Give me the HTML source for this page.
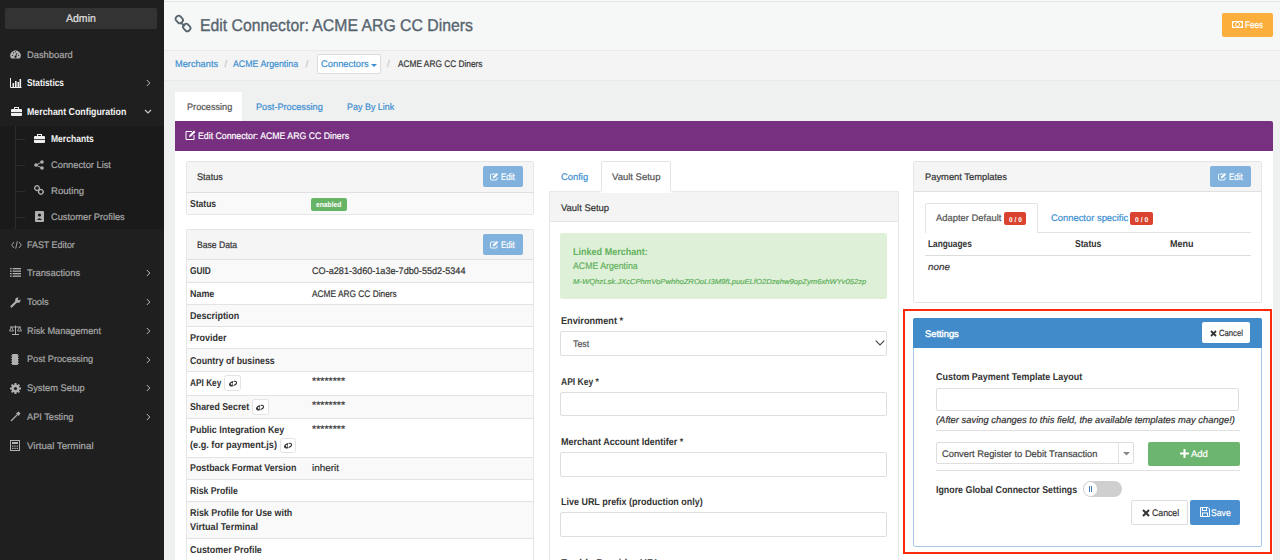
<!DOCTYPE html>
<html><head><meta charset="utf-8"><style>
html,body{margin:0;padding:0;width:1280px;height:560px;overflow:hidden;background:#eff0f0;font-family:'Liberation Sans', sans-serif;}
.t{position:absolute;white-space:nowrap;line-height:1;text-rendering:geometricPrecision;}
.t[style*="font-weight:400"]{-webkit-text-stroke:0.2px currentColor}
svg{position:absolute;overflow:visible}
</style></head><body>
<div style="position:absolute;left:0.00px;top:0.00px;width:163.50px;height:560.00px;background:#1f1f1f"></div>
<div style="position:absolute;left:0.00px;top:126.00px;width:163.50px;height:103.00px;background:#1a1a1a"></div>
<div style="position:absolute;left:5.20px;top:7.50px;width:151.40px;height:21.60px;background:#333;border-radius:2px"></div>
<div class="t" style="left:65.70px;top:14px;font-size:11px;color:#e0e0e0;font-weight:400;transform:scaleX(0.9562);transform-origin:0 0;">Admin</div>
<div class="t" style="left:26.80px;top:51px;font-size:9.5px;color:#a8a8a8;font-weight:400;transform:scaleX(0.9829);transform-origin:0 0;">Dashboard</div>
<div class="t" style="left:27.00px;top:79px;font-size:10px;color:#f2f2f2;font-weight:600;transform:scaleX(0.8307);transform-origin:0 0;">Statistics</div>
<div class="t" style="left:26.80px;top:108px;font-size:10px;color:#f2f2f2;font-weight:600;transform:scaleX(0.8805);transform-origin:0 0;">Merchant Configuration</div>
<div class="t" style="left:50.90px;top:135px;font-size:10px;color:#f2f2f2;font-weight:700;transform:scaleX(0.8543);transform-origin:0 0;">Merchants</div>
<div class="t" style="left:50.90px;top:161px;font-size:9.5px;color:#a8a8a8;font-weight:400;transform:scaleX(0.9787);transform-origin:0 0;">Connector List</div>
<div class="t" style="left:50.90px;top:187px;font-size:9.5px;color:#a8a8a8;font-weight:400;transform:scaleX(1.0104);transform-origin:0 0;">Routing</div>
<div class="t" style="left:50.90px;top:213px;font-size:9.5px;color:#a8a8a8;font-weight:400;transform:scaleX(0.9770);transform-origin:0 0;">Customer Profiles</div>
<div class="t" style="left:27.00px;top:241px;font-size:9.5px;color:#a8a8a8;font-weight:400;transform:scaleX(0.9364);transform-origin:0 0;">FAST Editor</div>
<div class="t" style="left:27.00px;top:269px;font-size:9.5px;color:#a8a8a8;font-weight:400;transform:scaleX(0.9838);transform-origin:0 0;">Transactions</div>
<div class="t" style="left:27.00px;top:298px;font-size:9.5px;color:#a8a8a8;font-weight:400;transform:scaleX(0.9809);transform-origin:0 0;">Tools</div>
<div class="t" style="left:26.70px;top:327px;font-size:9.5px;color:#a8a8a8;font-weight:400;transform:scaleX(0.9659);transform-origin:0 0;">Risk Management</div>
<div class="t" style="left:26.70px;top:355px;font-size:9.5px;color:#a8a8a8;font-weight:400;transform:scaleX(0.9626);transform-origin:0 0;">Post Processing</div>
<div class="t" style="left:26.70px;top:384px;font-size:9.5px;color:#a8a8a8;font-weight:400;transform:scaleX(0.9770);transform-origin:0 0;">System Setup</div>
<div class="t" style="left:26.70px;top:413px;font-size:9.5px;color:#a8a8a8;font-weight:400;transform:scaleX(0.9693);transform-origin:0 0;">API Testing</div>
<div class="t" style="left:26.70px;top:442px;font-size:9.5px;color:#a8a8a8;font-weight:400;transform:scaleX(1.0217);transform-origin:0 0;">Virtual Terminal</div>
<div style="position:absolute;left:15.00px;top:126.00px;width:1.00px;height:103.00px;background:#2c2c2c"></div>
<div style="position:absolute;left:15.00px;top:139.00px;width:10.00px;height:1.00px;background:#2c2c2c"></div>
<div style="position:absolute;left:15.00px;top:165.00px;width:10.00px;height:1.00px;background:#2c2c2c"></div>
<div style="position:absolute;left:15.00px;top:191.00px;width:10.00px;height:1.00px;background:#2c2c2c"></div>
<div style="position:absolute;left:15.00px;top:217.00px;width:10.00px;height:1.00px;background:#2c2c2c"></div>
<svg style="left:145.5px;top:78.8px" width="5" height="8"><path d="M0.8 1 L3.8 4 L0.8 7" fill="none" stroke="#bbb" stroke-width="1"/></svg>
<svg style="left:145.5px;top:268.8px" width="5" height="8"><path d="M0.8 1 L3.8 4 L0.8 7" fill="none" stroke="#bbb" stroke-width="1"/></svg>
<svg style="left:145.5px;top:297.5px" width="5" height="8"><path d="M0.8 1 L3.8 4 L0.8 7" fill="none" stroke="#bbb" stroke-width="1"/></svg>
<svg style="left:145.5px;top:326.5px" width="5" height="8"><path d="M0.8 1 L3.8 4 L0.8 7" fill="none" stroke="#bbb" stroke-width="1"/></svg>
<svg style="left:145.5px;top:355.5px" width="5" height="8"><path d="M0.8 1 L3.8 4 L0.8 7" fill="none" stroke="#bbb" stroke-width="1"/></svg>
<svg style="left:145.5px;top:383.8px" width="5" height="8"><path d="M0.8 1 L3.8 4 L0.8 7" fill="none" stroke="#bbb" stroke-width="1"/></svg>
<svg style="left:145.5px;top:412.8px" width="5" height="8"><path d="M0.8 1 L3.8 4 L0.8 7" fill="none" stroke="#bbb" stroke-width="1"/></svg>
<svg style="left:143.5px;top:109px" width="8" height="5"><path d="M1 1 L4 4 L7 1" fill="none" stroke="#ccc" stroke-width="1.1"/></svg>
<svg style="left:10px;top:50px" width="11" height="9"><path d="M1.2 8.5 A5.2 5.2 0 1 1 9.8 8.5 Z" fill="#b0b0b0"/><circle cx="5.5" cy="6.8" r="1.1" fill="#1f1f1f"/><path d="M5.5 6.8 L7 3" stroke="#1f1f1f" stroke-width="0.9"/><circle cx="2.5" cy="5.5" r="0.6" fill="#1f1f1f"/><circle cx="3.6" cy="2.8" r="0.6" fill="#1f1f1f"/><circle cx="8.5" cy="5.5" r="0.6" fill="#1f1f1f"/><circle cx="5.5" cy="1.8" r="0.6" fill="#1f1f1f"/></svg>
<svg style="left:10px;top:78px" width="12" height="10"><path d="M0.5 0 V9.5 H11.5" fill="none" stroke="#eee" stroke-width="1"/><rect x="2.5" y="5" width="1.6" height="4" fill="#eee"/><rect x="5" y="3" width="1.6" height="6" fill="#eee"/><rect x="7.5" y="4" width="1.6" height="5" fill="#eee"/><rect x="9.5" y="1" width="1.6" height="8" fill="#eee"/></svg>
<svg style="left:10.5px;top:107px" width="11" height="9"><rect x="3.5" y="0.5" width="4" height="2" fill="none" stroke="#f0f0f0" stroke-width="1"/><rect x="0" y="2" width="11" height="7" rx="1" fill="#f0f0f0"/><rect x="0" y="5" width="11" height="0.8" fill="#1f1f1f"/></svg>
<svg style="left:34.2px;top:134px" width="11" height="9"><rect x="3.5" y="0.5" width="4" height="2" fill="none" stroke="#f0f0f0" stroke-width="1"/><rect x="0" y="2" width="11" height="7" rx="1" fill="#f0f0f0"/><rect x="0" y="5" width="11" height="0.8" fill="#1f1f1f"/></svg>
<svg style="left:34px;top:160px" width="10" height="10"><circle cx="2" cy="5" r="1.8" fill="#b0b0b0"/><circle cx="8" cy="2" r="1.8" fill="#b0b0b0"/><circle cx="8" cy="8" r="1.8" fill="#b0b0b0"/><path d="M2 5 L8 2 M2 5 L8 8" stroke="#b0b0b0" stroke-width="1"/></svg>
<svg style="left:34px;top:185px" width="10" height="10"><rect x="0.8" y="0.8" width="4.5" height="4.5" rx="2" fill="none" stroke="#b0b0b0" stroke-width="1.3" transform="rotate(45 3 3)"/><rect x="4.6" y="4.6" width="4.5" height="4.5" rx="2" fill="none" stroke="#b0b0b0" stroke-width="1.3" transform="rotate(45 6.9 6.9)"/></svg>
<svg style="left:35px;top:211px" width="9" height="11"><rect x="0" y="0" width="9" height="11" rx="1" fill="#b0b0b0"/><circle cx="4.5" cy="4" r="1.6" fill="#1a1a1a"/><path d="M2 9 Q4.5 5.5 7 9 Z" fill="#1a1a1a"/></svg>
<svg style="left:10.5px;top:241px" width="11" height="8"><path d="M3 1 L0.7 4 L3 7 M8 1 L10.3 4 L8 7 M6.3 0.3 L4.7 7.7" fill="none" stroke="#b0b0b0" stroke-width="0.9"/></svg>
<svg style="left:10px;top:268px" width="11" height="9"><rect x="0" y="0" width="1.6" height="1.3" fill="#b0b0b0"/><rect x="2.6" y="0" width="8.4" height="1.3" fill="#b0b0b0"/><rect x="0" y="2.5" width="1.6" height="1.3" fill="#b0b0b0"/><rect x="2.6" y="2.5" width="8.4" height="1.3" fill="#b0b0b0"/><rect x="0" y="5" width="1.6" height="1.3" fill="#b0b0b0"/><rect x="2.6" y="5" width="8.4" height="1.3" fill="#b0b0b0"/><rect x="0" y="7.5" width="1.6" height="1.3" fill="#b0b0b0"/><rect x="2.6" y="7.5" width="8.4" height="1.3" fill="#b0b0b0"/></svg>
<svg style="left:10px;top:297px" width="11" height="11"><path d="M1.5 9.5 L6 5" stroke="#b0b0b0" stroke-width="2.2" stroke-linecap="round"/><circle cx="7.8" cy="3.2" r="2.6" fill="#b0b0b0"/><circle cx="9" cy="2" r="1.2" fill="#1f1f1f"/></svg>
<svg style="left:9px;top:325px" width="13" height="10"><path d="M6.5 0.5 V9 M1 2 H12 M3 9.5 H10" stroke="#b0b0b0" stroke-width="1"/><path d="M0.5 6 L2.5 2 L4.5 6 Z M8.5 6 L10.5 2 L12.5 6 Z" fill="none" stroke="#b0b0b0" stroke-width="0.9"/></svg>
<svg style="left:11px;top:354px" width="8" height="11"><rect x="1" y="0" width="6" height="11" rx="1" fill="#b0b0b0"/><path d="M0 2 H8 M0 4.5 H8 M0 7 H8 M0 9.5 H8" stroke="#b0b0b0" stroke-width="0.8"/></svg>
<svg style="left:10px;top:383px" width="11" height="11"><circle cx="5.5" cy="5.5" r="4" fill="#b0b0b0"/><rect x="4.5" y="0" width="2" height="11" fill="#b0b0b0" transform="rotate(0 5.5 5.5)"/><rect x="4.5" y="0" width="2" height="11" fill="#b0b0b0" transform="rotate(45 5.5 5.5)"/><rect x="4.5" y="0" width="2" height="11" fill="#b0b0b0" transform="rotate(90 5.5 5.5)"/><rect x="4.5" y="0" width="2" height="11" fill="#b0b0b0" transform="rotate(135 5.5 5.5)"/><circle cx="5.5" cy="5.5" r="1.6" fill="#1f1f1f"/></svg>
<svg style="left:10px;top:411px" width="11" height="11"><path d="M1 10 L7 4" stroke="#b0b0b0" stroke-width="1.2"/><path d="M6 2.5 L8.5 0.5 L10.5 2.5 L8.5 5 Z" fill="#b0b0b0"/></svg>
<svg style="left:10px;top:440px" width="10" height="11"><rect x="0.5" y="0.5" width="9" height="10" fill="none" stroke="#b0b0b0" stroke-width="1"/><rect x="2" y="2" width="6" height="2" fill="#b0b0b0"/><rect x="2" y="5.5" width="1.4" height="1.2" fill="#b0b0b0"/><rect x="2" y="7.8" width="1.4" height="1.2" fill="#b0b0b0"/><rect x="4.3" y="5.5" width="1.4" height="1.2" fill="#b0b0b0"/><rect x="4.3" y="7.8" width="1.4" height="1.2" fill="#b0b0b0"/><rect x="6.6" y="5.5" width="1.4" height="1.2" fill="#b0b0b0"/><rect x="6.6" y="7.8" width="1.4" height="1.2" fill="#b0b0b0"/></svg>
<div style="position:absolute;left:163.50px;top:0.00px;width:1116.50px;height:50.30px;background:#f6f7f7"></div>
<div style="position:absolute;left:163.50px;top:0.50px;width:1116.50px;height:1.50px;background:#e6e8e8"></div>
<div style="position:absolute;left:163.50px;top:50.00px;width:1116.50px;height:1.00px;background:#e9eaea"></div>
<div style="position:absolute;left:163.50px;top:51.00px;width:1116.50px;height:29.30px;background:#f4f4f4"></div>
<div style="position:absolute;left:163.50px;top:80.00px;width:1116.50px;height:1.00px;background:#e8e9e9"></div>
<svg style="left:174px;top:15px" width="18" height="18"><rect x="1.5" y="1.5" width="7.5" height="6" rx="2.5" fill="none" stroke="#56646e" stroke-width="1.8" transform="rotate(45 5.25 4.5)"/><rect x="9" y="9.5" width="7.5" height="6" rx="2.5" fill="none" stroke="#56646e" stroke-width="1.8" transform="rotate(45 12.75 12.5)"/><path d="M7 8 L11 11" stroke="#56646e" stroke-width="1.6"/></svg>
<div class="t" style="left:199.87px;top:17px;font-size:17px;color:#56646e;font-weight:400;transform:scaleX(0.9286);transform-origin:0 0;-webkit-text-stroke:0.35px #56646e;">Edit Connector: ACME ARG CC Diners</div>
<div style="position:absolute;left:1222.30px;top:13.00px;width:50.50px;height:24.30px;background:#fbae3c;border-radius:2px"></div>
<svg style="left:1232px;top:21.3px" width="11" height="7"><rect x="0.5" y="0.5" width="10" height="6" fill="none" stroke="#fff" stroke-width="1"/><circle cx="5.5" cy="3.5" r="2" fill="none" stroke="#fff" stroke-width="1"/><rect x="0" y="0" width="2" height="2" fill="#fff"/><rect x="9" y="0" width="2" height="2" fill="#fff"/><rect x="0" y="5" width="2" height="2" fill="#fff"/><rect x="9" y="5" width="2" height="2" fill="#fff"/></svg>
<div class="t" style="left:1245.00px;top:21px;font-size:9.5px;color:#fff;font-weight:400;transform:scaleX(0.8610);transform-origin:0 0;">Fees</div>
<div class="t" style="left:174.70px;top:60px;font-size:9.5px;color:#3d8fd1;font-weight:400;transform:scaleX(0.9708);transform-origin:0 0;">Merchants</div>
<div class="t" style="left:224.50px;top:60px;font-size:9.5px;color:#c8c8c8;font-weight:400;">/</div>
<div class="t" style="left:232.80px;top:60px;font-size:9.5px;color:#3d8fd1;font-weight:400;transform:scaleX(0.9263);transform-origin:0 0;">ACME Argentina</div>
<div class="t" style="left:305.80px;top:60px;font-size:9.5px;color:#c8c8c8;font-weight:400;">/</div>
<div style="position:absolute;left:316.60px;top:54.00px;width:64.00px;height:20.00px;background:#fff;border:1px solid #dcdcdc;border-radius:2px;box-sizing:border-box"></div>
<div class="t" style="left:321.00px;top:60px;font-size:9.5px;color:#3d8fd1;font-weight:400;transform:scaleX(0.9830);transform-origin:0 0;">Connectors</div>
<svg style="left:371px;top:63.5px" width="6" height="4"><path d="M0 0 H6 L3 3 Z" fill="#3d8fd1"/></svg>
<div class="t" style="left:387.00px;top:60px;font-size:9.5px;color:#c8c8c8;font-weight:400;">/</div>
<div class="t" style="left:397.80px;top:60px;font-size:9.5px;color:#333;font-weight:400;transform:scaleX(0.8750);transform-origin:0 0;">ACME ARG CC Diners</div>
<div style="position:absolute;left:174.80px;top:91.80px;width:67.50px;height:30.20px;background:#fff"></div>
<div class="t" style="left:186.50px;top:103px;font-size:9.5px;color:#555;font-weight:400;transform:scaleX(0.9634);transform-origin:0 0;">Processing</div>
<div class="t" style="left:256.00px;top:103px;font-size:9.5px;color:#3d8fd1;font-weight:400;transform:scaleX(0.9654);transform-origin:0 0;">Post-Processing</div>
<div class="t" style="left:346.90px;top:103px;font-size:9.5px;color:#3d8fd1;font-weight:400;transform:scaleX(0.9422);transform-origin:0 0;">Pay By Link</div>
<div style="position:absolute;left:174.70px;top:121.10px;width:1098.30px;height:29.60px;background:#76307f;border-top-right-radius:2px"></div>
<svg style="left:185px;top:130px" width="11" height="10"><path d="M7 1.5 H1 V9.5 H9 V5" fill="none" stroke="#fff" stroke-width="1"/><path d="M4 7 L4.5 5 L9 0.5 L10.5 2 L6 6.5 Z" fill="#fff"/></svg>
<div class="t" style="left:197.50px;top:132px;font-size:9.5px;color:#fff;font-weight:400;transform:scaleX(0.9197);transform-origin:0 0;">Edit Connector: ACME ARG CC Diners</div>
<div style="position:absolute;left:174.70px;top:150.70px;width:1098.30px;height:409.30px;background:#fff"></div>
<div style="position:absolute;left:185.70px;top:161.00px;width:348.60px;height:53.50px;background:#fff;border:1px solid #e6e6e6;border-radius:2px;box-sizing:border-box"></div>
<div style="position:absolute;left:186.70px;top:162.00px;width:346.60px;height:30.00px;background:#f5f5f5"></div>
<div style="position:absolute;left:186.70px;top:191.50px;width:346.60px;height:1.50px;background:#e0e0e0"></div>
<div class="t" style="left:197.00px;top:173px;font-size:9.5px;color:#333;font-weight:400;transform:scaleX(0.9602);transform-origin:0 0;">Status</div>
<div style="position:absolute;left:482.70px;top:166.00px;width:39.90px;height:21.00px;background:#80b2dd;border-radius:2px"></div>
<svg style="left:490.2px;top:173px" width="9" height="7.5"><path d="M5.5 1 H1.5 Q0.5 1 0.5 2 V6 Q0.5 7 1.5 7 H6 Q7 7 7 6 V4.5" fill="none" stroke="#fff" stroke-width="0.9"/><path d="M2.8 5.3 L3.2 3.6 L6.8 0 L8.2 1.4 L4.6 5 Z" fill="#fff"/></svg>
<div class="t" style="left:501.00px;top:173px;font-size:9.5px;color:#fff;font-weight:400;transform:scaleX(0.8368);transform-origin:0 0;">Edit</div>
<div style="position:absolute;left:186.70px;top:193.00px;width:346.60px;height:20.50px;background:#f9f9f9"></div>
<div class="t" style="left:190.00px;top:200px;font-size:10px;color:#333;font-weight:700;transform:scaleX(0.8548);transform-origin:0 0;">Status</div>
<div style="position:absolute;left:311.00px;top:198.30px;width:35.90px;height:12.40px;background:#67b467;border-radius:2px"></div>
<div class="t" style="left:316.00px;top:201px;font-size:7.5px;color:#fff;font-weight:700;transform:scaleX(0.8971);transform-origin:0 0;">enabled</div>
<div style="position:absolute;left:185.70px;top:229.20px;width:348.60px;height:370.80px;background:#fff;border:1px solid #e6e6e6;border-radius:2px;box-sizing:border-box"></div>
<div style="position:absolute;left:186.70px;top:230.20px;width:346.60px;height:28.80px;background:#f5f5f5"></div>
<div style="position:absolute;left:186.70px;top:258.50px;width:346.60px;height:1.50px;background:#e0e0e0"></div>
<div class="t" style="left:197.20px;top:241px;font-size:9.5px;color:#333;font-weight:400;transform:scaleX(0.9051);transform-origin:0 0;">Base Data</div>
<div style="position:absolute;left:482.70px;top:233.80px;width:39.90px;height:20.80px;background:#80b2dd;border-radius:2px"></div>
<svg style="left:490.2px;top:240.8px" width="9" height="7.5"><path d="M5.5 1 H1.5 Q0.5 1 0.5 2 V6 Q0.5 7 1.5 7 H6 Q7 7 7 6 V4.5" fill="none" stroke="#fff" stroke-width="0.9"/><path d="M2.8 5.3 L3.2 3.6 L6.8 0 L8.2 1.4 L4.6 5 Z" fill="#fff"/></svg>
<div class="t" style="left:501.00px;top:241px;font-size:9.5px;color:#fff;font-weight:400;transform:scaleX(0.8368);transform-origin:0 0;">Edit</div>
<div style="position:absolute;left:186.70px;top:260.00px;width:346.60px;height:22.50px;background:#f9f9f9"></div>
<div style="position:absolute;left:186.70px;top:282.50px;width:346.60px;height:21.90px;background:#fff"></div>
<div style="position:absolute;left:186.70px;top:304.40px;width:346.60px;height:22.20px;background:#f9f9f9"></div>
<div style="position:absolute;left:186.70px;top:326.60px;width:346.60px;height:22.00px;background:#fff"></div>
<div style="position:absolute;left:186.70px;top:348.60px;width:346.60px;height:22.40px;background:#f9f9f9"></div>
<div style="position:absolute;left:186.70px;top:371.00px;width:346.60px;height:24.20px;background:#fff"></div>
<div style="position:absolute;left:186.70px;top:395.20px;width:346.60px;height:23.00px;background:#f9f9f9"></div>
<div style="position:absolute;left:186.70px;top:418.20px;width:346.60px;height:39.40px;background:#fff"></div>
<div style="position:absolute;left:186.70px;top:457.60px;width:346.60px;height:21.40px;background:#f9f9f9"></div>
<div style="position:absolute;left:186.70px;top:479.00px;width:346.60px;height:22.60px;background:#fff"></div>
<div style="position:absolute;left:186.70px;top:501.60px;width:346.60px;height:36.70px;background:#f9f9f9"></div>
<div style="position:absolute;left:186.70px;top:538.30px;width:346.60px;height:21.70px;background:#fff"></div>
<div style="position:absolute;left:186.70px;top:282.00px;width:346.60px;height:1.00px;background:#e3e3e3"></div>
<div style="position:absolute;left:186.70px;top:303.90px;width:346.60px;height:1.00px;background:#e3e3e3"></div>
<div style="position:absolute;left:186.70px;top:326.10px;width:346.60px;height:1.00px;background:#e3e3e3"></div>
<div style="position:absolute;left:186.70px;top:348.10px;width:346.60px;height:1.00px;background:#e3e3e3"></div>
<div style="position:absolute;left:186.70px;top:370.50px;width:346.60px;height:1.00px;background:#e3e3e3"></div>
<div style="position:absolute;left:186.70px;top:394.70px;width:346.60px;height:1.00px;background:#e3e3e3"></div>
<div style="position:absolute;left:186.70px;top:417.70px;width:346.60px;height:1.00px;background:#e3e3e3"></div>
<div style="position:absolute;left:186.70px;top:457.10px;width:346.60px;height:1.00px;background:#e3e3e3"></div>
<div style="position:absolute;left:186.70px;top:478.50px;width:346.60px;height:1.00px;background:#e3e3e3"></div>
<div style="position:absolute;left:186.70px;top:501.10px;width:346.60px;height:1.00px;background:#e3e3e3"></div>
<div style="position:absolute;left:186.70px;top:537.80px;width:346.60px;height:1.00px;background:#e3e3e3"></div>
<div style="position:absolute;left:186.70px;top:559.50px;width:346.60px;height:1.00px;background:#e3e3e3"></div>
<div class="t" style="left:189.80px;top:267px;font-size:10px;color:#333;font-weight:700;transform:scaleX(0.8354);transform-origin:0 0;">GUID</div>
<div class="t" style="left:311.60px;top:267px;font-size:9.5px;color:#333;font-weight:400;transform:scaleX(0.9590);transform-origin:0 0;">CO-a281-3d60-1a3e-7db0-55d2-5344</div>
<div class="t" style="left:189.80px;top:290px;font-size:10px;color:#333;font-weight:700;transform:scaleX(0.8925);transform-origin:0 0;">Name</div>
<div class="t" style="left:311.60px;top:290px;font-size:9.5px;color:#333;font-weight:400;transform:scaleX(0.8770);transform-origin:0 0;">ACME ARG CC Diners</div>
<div class="t" style="left:189.80px;top:312px;font-size:10px;color:#333;font-weight:700;transform:scaleX(0.8962);transform-origin:0 0;">Description</div>
<div class="t" style="left:189.80px;top:334px;font-size:10px;color:#333;font-weight:700;transform:scaleX(0.9022);transform-origin:0 0;">Provider</div>
<div class="t" style="left:189.80px;top:357px;font-size:10px;color:#333;font-weight:700;transform:scaleX(0.8753);transform-origin:0 0;">Country of business</div>
<div class="t" style="left:189.80px;top:379px;font-size:10px;color:#333;font-weight:700;transform:scaleX(0.8292);transform-origin:0 0;">API Key</div>
<div class="t" style="left:311.60px;top:377px;font-size:9.5px;color:#333;font-weight:400;transform:scaleX(1.1178);transform-origin:0 0;">********</div>
<div class="t" style="left:189.80px;top:403px;font-size:10px;color:#333;font-weight:700;transform:scaleX(0.8789);transform-origin:0 0;">Shared Secret</div>
<div class="t" style="left:311.60px;top:401px;font-size:9.5px;color:#333;font-weight:400;transform:scaleX(1.1178);transform-origin:0 0;">********</div>
<div class="t" style="left:189.80px;top:426px;font-size:10px;color:#333;font-weight:700;transform:scaleX(0.8933);transform-origin:0 0;">Public Integration Key</div>
<div class="t" style="left:189.80px;top:441px;font-size:10px;color:#333;font-weight:700;transform:scaleX(0.9157);transform-origin:0 0;">(e.g. for payment.js)</div>
<div class="t" style="left:311.60px;top:425px;font-size:9.5px;color:#333;font-weight:400;transform:scaleX(1.1178);transform-origin:0 0;">********</div>
<div class="t" style="left:189.80px;top:464px;font-size:10px;color:#333;font-weight:700;transform:scaleX(0.8855);transform-origin:0 0;">Postback Format Version</div>
<div class="t" style="left:311.60px;top:464px;font-size:9.5px;color:#333;font-weight:400;transform:scaleX(1.0444);transform-origin:0 0;">inherit</div>
<div class="t" style="left:189.80px;top:487px;font-size:10px;color:#333;font-weight:700;transform:scaleX(0.8691);transform-origin:0 0;">Risk Profile</div>
<div class="t" style="left:189.80px;top:509px;font-size:10px;color:#333;font-weight:700;transform:scaleX(0.8893);transform-origin:0 0;">Risk Profile for Use with</div>
<div class="t" style="left:189.80px;top:523px;font-size:10px;color:#333;font-weight:700;transform:scaleX(0.9109);transform-origin:0 0;">Virtual Terminal</div>
<div class="t" style="left:189.80px;top:546px;font-size:10px;color:#333;font-weight:700;transform:scaleX(0.8913);transform-origin:0 0;">Customer Profile</div>
<div style="position:absolute;left:224.40px;top:375.10px;width:16.90px;height:15.80px;background:#fff;border:1px solid #e3e3e3;border-radius:2.5px;box-sizing:border-box"></div>
<svg style="left:227.85000000000002px;top:379.5px" width="10" height="7"><defs><clipPath id="cl224"><path d="M-2 -2 L7.2 -2 L2.6 9 L-2 9 Z"/></clipPath><clipPath id="cr224"><path d="M7.9 -2 L12 -2 L12 9 L3.3 9 Z"/></clipPath></defs><g transform="rotate(-22 5 3.5)"><ellipse cx="5" cy="3.6" rx="4.2" ry="2.5" fill="#333" clip-path="url(#cl224)"/><ellipse cx="5" cy="3.6" rx="3.7" ry="2" fill="none" stroke="#333" stroke-width="1" clip-path="url(#cr224)"/><circle cx="3.6" cy="3.4" r="0.9" fill="#fff"/></g></svg>
<div style="position:absolute;left:252.20px;top:399.40px;width:16.40px;height:15.30px;background:#fff;border:1px solid #e3e3e3;border-radius:2.5px;box-sizing:border-box"></div>
<svg style="left:255.39999999999998px;top:403.54999999999995px" width="10" height="7"><defs><clipPath id="cl252"><path d="M-2 -2 L7.2 -2 L2.6 9 L-2 9 Z"/></clipPath><clipPath id="cr252"><path d="M7.9 -2 L12 -2 L12 9 L3.3 9 Z"/></clipPath></defs><g transform="rotate(-22 5 3.5)"><ellipse cx="5" cy="3.6" rx="4.2" ry="2.5" fill="#333" clip-path="url(#cl252)"/><ellipse cx="5" cy="3.6" rx="3.7" ry="2" fill="none" stroke="#333" stroke-width="1" clip-path="url(#cr252)"/><circle cx="3.6" cy="3.4" r="0.9" fill="#fff"/></g></svg>
<div style="position:absolute;left:279.50px;top:437.50px;width:16.90px;height:15.80px;background:#fff;border:1px solid #e3e3e3;border-radius:2.5px;box-sizing:border-box"></div>
<svg style="left:282.95px;top:441.9px" width="10" height="7"><defs><clipPath id="cl279"><path d="M-2 -2 L7.2 -2 L2.6 9 L-2 9 Z"/></clipPath><clipPath id="cr279"><path d="M7.9 -2 L12 -2 L12 9 L3.3 9 Z"/></clipPath></defs><g transform="rotate(-22 5 3.5)"><ellipse cx="5" cy="3.6" rx="4.2" ry="2.5" fill="#333" clip-path="url(#cl279)"/><ellipse cx="5" cy="3.6" rx="3.7" ry="2" fill="none" stroke="#333" stroke-width="1" clip-path="url(#cr279)"/><circle cx="3.6" cy="3.4" r="0.9" fill="#fff"/></g></svg>
<div class="t" style="left:560.80px;top:173px;font-size:9.5px;color:#3d8fd1;font-weight:400;transform:scaleX(0.9898);transform-origin:0 0;">Config</div>
<div style="position:absolute;left:600.70px;top:161.40px;width:70.70px;height:31.10px;background:#fff;border:1px solid #e3e3e3;border-bottom:none;border-radius:2px 2px 0 0;box-sizing:border-box"></div>
<div class="t" style="left:612.00px;top:173px;font-size:9.5px;color:#555;font-weight:400;">Vault Setup</div>
<div style="position:absolute;left:549.30px;top:191.40px;width:350.00px;height:408.60px;background:#fff;border:1px solid #e8e8e8;box-sizing:border-box"></div>
<div style="position:absolute;left:550.30px;top:192.40px;width:348.00px;height:29.00px;background:#f4f4f4"></div>
<div style="position:absolute;left:550.30px;top:221.00px;width:348.00px;height:1.00px;background:#e3e3e3"></div>
<div style="position:absolute;left:600.70px;top:191.00px;width:70.70px;height:1.50px;background:#fff"></div>
<div style="position:absolute;left:601.70px;top:191.00px;width:68.70px;height:2.00px;background:#fff"></div>
<div class="t" style="left:560.70px;top:204px;font-size:9.5px;color:#333;font-weight:400;transform:scaleX(0.9931);transform-origin:0 0;">Vault Setup</div>
<div style="position:absolute;left:560.40px;top:233.30px;width:326.50px;height:65.30px;background:#dff0d8;border-radius:2px"></div>
<div class="t" style="left:572.50px;top:248px;font-size:10px;color:#5fb15c;font-weight:700;transform:scaleX(0.9035);transform-origin:0 0;">Linked Merchant:</div>
<div class="t" style="left:572.50px;top:262px;font-size:9.5px;color:#5fb15c;font-weight:400;transform:scaleX(0.9207);transform-origin:0 0;">ACME Argentina</div>
<div class="t" style="left:572.50px;top:278px;font-size:7.3px;color:#5fb15c;font-weight:400;font-style:italic;transform:scaleX(1.0485);transform-origin:0 0;">M-WQhzLsk.JXcCPhmVoPwhhoZROoLI3M9fLpuuELfO2Dzehw9opZym6xhWYv052zp</div>
<div class="t" style="left:560.80px;top:317px;font-size:10px;color:#333;font-weight:700;transform:scaleX(0.9161);transform-origin:0 0;">Environment *</div>
<div style="position:absolute;left:560.20px;top:331.20px;width:326.60px;height:24.50px;background:#fff;border:1px solid #dedede;border-radius:2px;box-sizing:border-box"></div>
<div class="t" style="left:573.20px;top:340px;font-size:9.5px;color:#555;font-weight:400;transform:scaleX(0.9335);transform-origin:0 0;">Test</div>
<svg style="left:875px;top:340px" width="10" height="6"><path d="M0.7 0.7 L5 5 L9.3 0.7" fill="none" stroke="#444" stroke-width="1.1"/></svg>
<div class="t" style="left:560.80px;top:378px;font-size:10px;color:#333;font-weight:700;transform:scaleX(0.8503);transform-origin:0 0;">API Key *</div>
<div style="position:absolute;left:560.20px;top:391.60px;width:326.60px;height:24.00px;background:#fff;border:1px solid #dedede;border-radius:2px;box-sizing:border-box"></div>
<div class="t" style="left:560.80px;top:438px;font-size:10px;color:#333;font-weight:700;transform:scaleX(0.9014);transform-origin:0 0;">Merchant Account Identifer *</div>
<div style="position:absolute;left:560.20px;top:452.10px;width:326.60px;height:24.60px;background:#fff;border:1px solid #dedede;border-radius:2px;box-sizing:border-box"></div>
<div class="t" style="left:560.80px;top:498px;font-size:10px;color:#333;font-weight:700;transform:scaleX(0.8962);transform-origin:0 0;">Live URL prefix (production only)</div>
<div style="position:absolute;left:560.20px;top:512.30px;width:326.60px;height:24.70px;background:#fff;border:1px solid #dedede;border-radius:2px;box-sizing:border-box"></div>
<div class="t" style="left:560.80px;top:559px;font-size:10px;color:#333;font-weight:700;">Enable Provider URL</div>
<div style="position:absolute;left:913.00px;top:161.40px;width:349.20px;height:141.90px;background:#fff;border:1px solid #e6e6e6;border-radius:2px;box-sizing:border-box"></div>
<div style="position:absolute;left:914.00px;top:162.40px;width:347.20px;height:29.00px;background:#f5f5f5"></div>
<div style="position:absolute;left:914.00px;top:190.90px;width:347.20px;height:1.50px;background:#e0e0e0"></div>
<div class="t" style="left:924.50px;top:173px;font-size:9.5px;color:#333;font-weight:400;transform:scaleX(0.9835);transform-origin:0 0;">Payment Templates</div>
<div style="position:absolute;left:1210.30px;top:166.00px;width:40.70px;height:21.10px;background:#80b2dd;border-radius:2px"></div>
<svg style="left:1217.8px;top:173px" width="9" height="7.5"><path d="M5.5 1 H1.5 Q0.5 1 0.5 2 V6 Q0.5 7 1.5 7 H6 Q7 7 7 6 V4.5" fill="none" stroke="#fff" stroke-width="0.9"/><path d="M2.8 5.3 L3.2 3.6 L6.8 0 L8.2 1.4 L4.6 5 Z" fill="#fff"/></svg>
<div class="t" style="left:1228.60px;top:173px;font-size:9.5px;color:#fff;font-weight:400;transform:scaleX(0.8368);transform-origin:0 0;">Edit</div>
<div style="position:absolute;left:924.50px;top:232.00px;width:326.50px;height:1.00px;background:#e3e3e3"></div>
<div style="position:absolute;left:924.50px;top:203.00px;width:113.20px;height:30.00px;background:#fff;border:1px solid #e3e3e3;border-bottom:none;border-radius:2px 2px 0 0;box-sizing:border-box"></div>
<div class="t" style="left:936.00px;top:214px;font-size:9.5px;color:#555;font-weight:400;transform:scaleX(0.9899);transform-origin:0 0;">Adapter Default</div>
<div style="position:absolute;left:1004.00px;top:212.40px;width:22.00px;height:12.60px;background:#d9432f;border-radius:2px"></div>
<div class="t" style="left:1008.50px;top:218px;font-size:6.8px;color:#fff;font-weight:700;transform:scaleX(0.9669);transform-origin:0 0;">0 / 0</div>
<div class="t" style="left:1050.70px;top:214px;font-size:9.5px;color:#3d8fd1;font-weight:400;transform:scaleX(0.9885);transform-origin:0 0;">Connector specific</div>
<div style="position:absolute;left:1130.40px;top:212.40px;width:22.40px;height:12.60px;background:#d9432f;border-radius:2px"></div>
<div class="t" style="left:1134.90px;top:218px;font-size:6.8px;color:#fff;font-weight:700;transform:scaleX(0.9966);transform-origin:0 0;">0 / 0</div>
<div class="t" style="left:928.40px;top:240px;font-size:10px;color:#333;font-weight:700;transform:scaleX(0.8285);transform-origin:0 0;">Languages</div>
<div class="t" style="left:1075.30px;top:240px;font-size:10px;color:#333;font-weight:700;transform:scaleX(0.8613);transform-origin:0 0;">Status</div>
<div class="t" style="left:1169.50px;top:240px;font-size:10px;color:#333;font-weight:700;transform:scaleX(0.9038);transform-origin:0 0;">Menu</div>
<div style="position:absolute;left:924.50px;top:254.50px;width:326.50px;height:1.80px;background:#ddd"></div>
<div class="t" style="left:928.40px;top:263px;font-size:9.5px;color:#333;font-weight:400;font-style:italic;transform:scaleX(1.0360);transform-origin:0 0;">none</div>
<div style="position:absolute;left:903.00px;top:309.00px;width:369.00px;height:245.00px;border:2px solid #fa2a0a;box-sizing:border-box"></div>
<div style="position:absolute;left:912.90px;top:317.90px;width:349.20px;height:228.70px;background:#fff;border:1px solid #a9c9e8;border-radius:2px;box-sizing:border-box"></div>
<div style="position:absolute;left:912.90px;top:317.90px;width:349.20px;height:30.00px;background:#428bca;border-radius:2px 2px 0 0"></div>
<div class="t" style="left:924.50px;top:330px;font-size:9.5px;color:#fff;font-weight:400;transform:scaleX(0.9833);transform-origin:0 0;-webkit-text-stroke:0.4px #fff;">Settings</div>
<div style="position:absolute;left:1202.30px;top:322.30px;width:48.20px;height:21.10px;background:#fff;border-radius:2px"></div>
<svg style="left:1210.4px;top:329.5px" width="7" height="7"><path d="M1 1 L6 6 M6 1 L1 6" stroke="#333" stroke-width="1.8"/></svg>
<div class="t" style="left:1219.00px;top:329px;font-size:9px;color:#333;font-weight:400;transform:scaleX(0.8531);transform-origin:0 0;">Cancel</div>
<div class="t" style="left:935.70px;top:373px;font-size:10px;color:#333;font-weight:700;transform:scaleX(0.8959);transform-origin:0 0;">Custom Payment Template Layout</div>
<div style="position:absolute;left:935.70px;top:387.50px;width:303.60px;height:23.75px;background:#fff;border:1px solid #dedede;border-radius:2px;box-sizing:border-box"></div>
<div class="t" style="left:935.70px;top:416px;font-size:9.5px;color:#333;font-weight:400;font-style:italic;transform:scaleX(0.9877);transform-origin:0 0;">(After saving changes to this field, the available templates may change!)</div>
<div style="position:absolute;left:935.70px;top:430.00px;width:303.90px;height:1.00px;background:#e0e0e0"></div>
<div style="position:absolute;left:935.50px;top:441.50px;width:198.10px;height:22.70px;background:#fff;border:1px solid #dedede;border-radius:2px;box-sizing:border-box"></div>
<div style="position:absolute;left:1118.00px;top:442.50px;width:1.00px;height:20.70px;background:#e3e3e3"></div>
<svg style="left:1122.5px;top:451.5px" width="7" height="4"><path d="M0 0 H7 L3.5 3.5 Z" fill="#888"/></svg>
<div class="t" style="left:941.90px;top:450px;font-size:9.5px;color:#444;font-weight:400;transform:scaleX(0.9811);transform-origin:0 0;">Convert Register to Debit Transaction</div>
<div style="position:absolute;left:1148.20px;top:441.60px;width:91.40px;height:24.10px;background:#6cb56e;border-radius:2px"></div>
<svg style="left:1180.4px;top:448.8px" width="9" height="9"><path d="M4.5 0 V9 M0 4.5 H9" stroke="#fff" stroke-width="2"/></svg>
<div class="t" style="left:1190.50px;top:450px;font-size:9.5px;color:#fff;font-weight:400;transform:scaleX(0.9928);transform-origin:0 0;">Add</div>
<div style="position:absolute;left:935.70px;top:470.00px;width:303.90px;height:1.00px;background:#e0e0e0"></div>
<div class="t" style="left:935.70px;top:486px;font-size:10px;color:#333;font-weight:700;transform:scaleX(0.8850);transform-origin:0 0;">Ignore Global Connector Settings</div>
<div style="position:absolute;left:1083.20px;top:480.90px;width:38.40px;height:15.70px;background:#cfcfcf;border-radius:8px"></div>
<div style="position:absolute;left:1084.30px;top:482.00px;width:13.20px;height:13.50px;background:#fff;border-radius:50%"></div>
<div style="position:absolute;left:1089.00px;top:485.50px;width:1.00px;height:6.00px;background:#4a7fb5"></div>
<div style="position:absolute;left:1091.20px;top:485.50px;width:1.00px;height:6.00px;background:#4a7fb5"></div>
<div style="position:absolute;left:1131.30px;top:500.20px;width:57.10px;height:24.40px;background:#fff;border:1px solid #ddd;border-radius:2px;box-sizing:border-box"></div>
<svg style="left:1141.5px;top:508.5px" width="8" height="8"><path d="M1 1 L7 7 M7 1 L1 7" stroke="#333" stroke-width="2"/></svg>
<div class="t" style="left:1151.50px;top:509px;font-size:9.5px;color:#333;font-weight:400;transform:scaleX(0.9165);transform-origin:0 0;">Cancel</div>
<div style="position:absolute;left:1190.20px;top:500.20px;width:49.40px;height:24.40px;background:#4a8fd0;border-radius:2px"></div>
<svg style="left:1199.5px;top:507px" width="10" height="10"><path d="M0.5 0.5 H8 L9.5 2 V9.5 H0.5 Z" fill="none" stroke="#fff" stroke-width="1"/><rect x="2.5" y="0.5" width="4" height="3" fill="none" stroke="#fff" stroke-width="1"/><rect x="2.5" y="6" width="5" height="3.5" fill="none" stroke="#fff" stroke-width="1"/></svg>
<div class="t" style="left:1211.00px;top:509px;font-size:9.5px;color:#fff;font-weight:400;transform:scaleX(0.9125);transform-origin:0 0;">Save</div>
</body></html>
